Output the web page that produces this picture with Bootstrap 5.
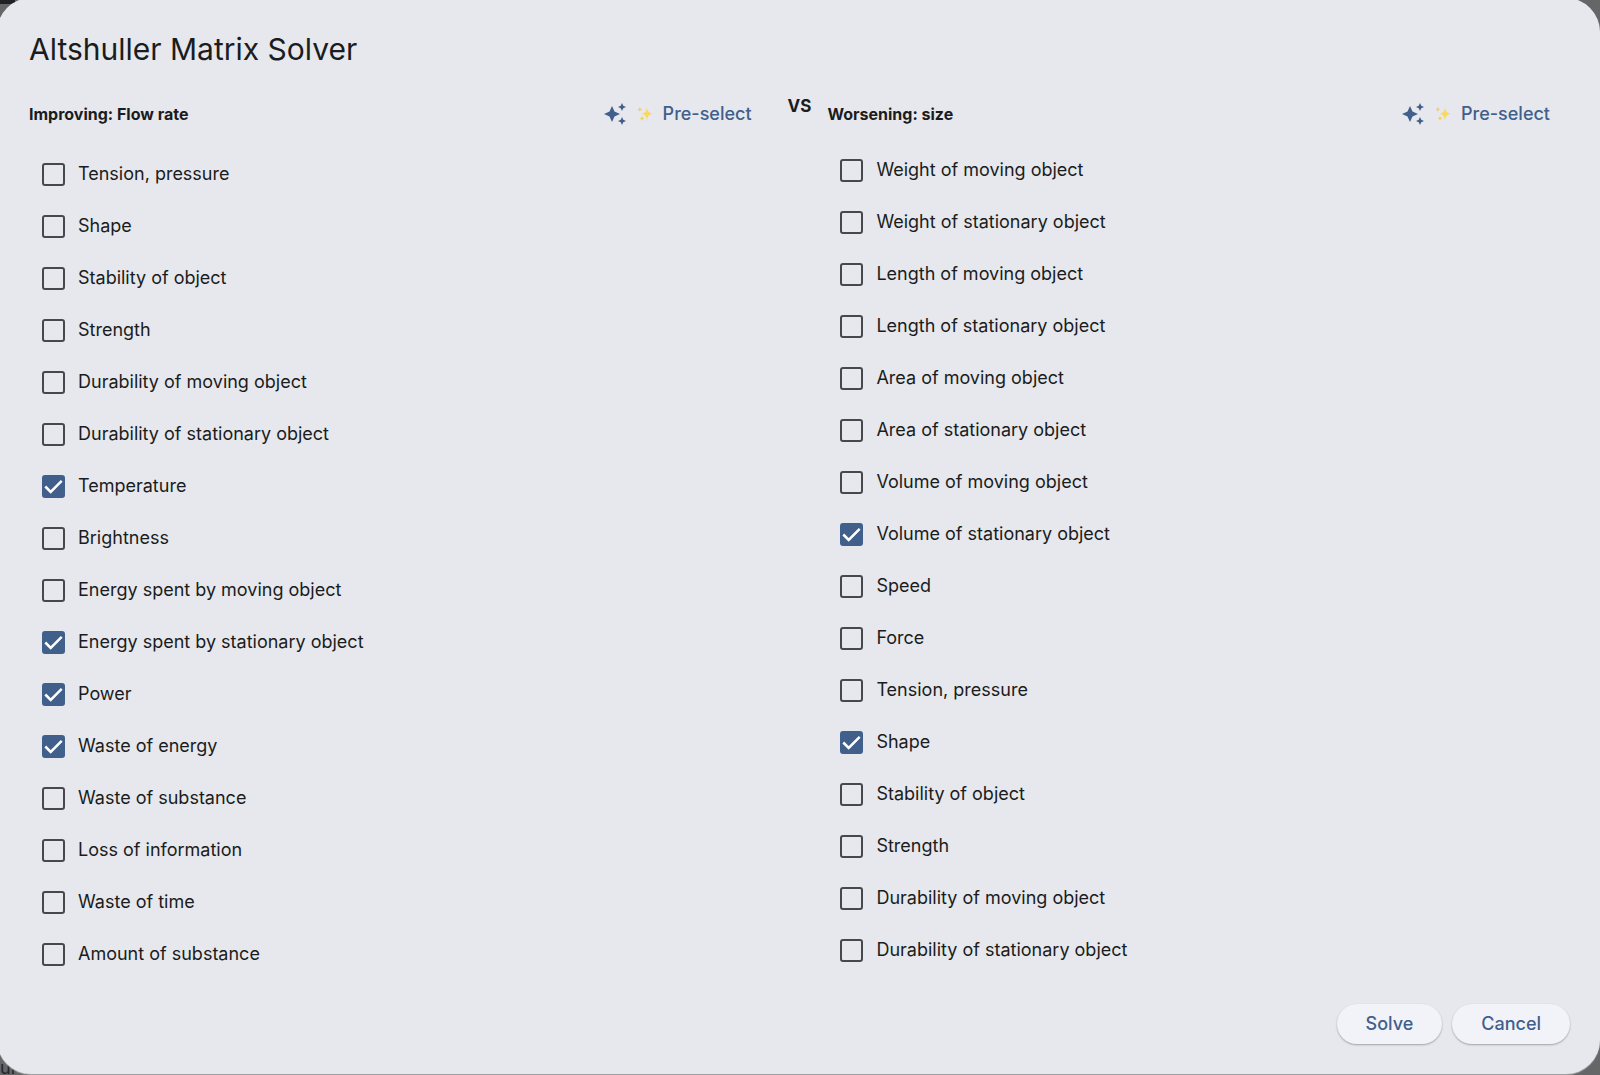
<!DOCTYPE html>
<html lang="en">
<head>
<meta charset="utf-8">
<meta name="viewport" content="width=device-width, initial-scale=1">
<title>Altshuller Matrix Solver</title>
<link href="https://cdn.jsdelivr.net/npm/bootstrap@5.3.0/dist/css/bootstrap.min.css" rel="stylesheet">
<style>
  body { font-family: Inter, "Noto Sans", sans-serif; font-size: 18px; line-height: 24px; color: #1a1c20; background: #656668; }
  .backdrop-page { position: absolute; inset: 0; overflow: hidden; color: #252629; }
  .page-bar { width: 15px; height: 4px; background: #202124; }
  .page-text { line-height: 14px; }
  .solver { border-radius: 34px; background: #e6e8ed; margin: -2px 0 1px -3px; padding: 30px 30px 30px 32px; min-height: calc(100vh + 1px); box-shadow: 0 1px 1px #a5a6a9; }
  .solver-title { font-size: 30px; line-height: 42px; font-weight: 400; }
  .side-head { min-height: 40px; margin-bottom: 10px; }
  .side-head.is-roomy { margin-bottom: 14px; }
  .side-name { font-size: 16px; line-height: 20px; font-weight: 700; }
  .versus { font-size: 17px; font-weight: 700; line-height: 24px; }
  .option { height: 52px; padding-left: 13px; gap: 13px; }
  .option .form-check-input { width: 23px; height: 23px; border: 2px solid #46484d; border-radius: 3px; background-color: transparent; }
  .option .form-check-input:checked { background-color: #415f8b; border-color: #415f8b; background-size: 23px 23px; background-position: center;
    background-image: url("data:image/svg+xml,%3csvg xmlns='http://www.w3.org/2000/svg' viewBox='0 0 23 23'%3e%3cpath fill='none' stroke='%23fff' stroke-width='2.5' d='M3.300 11.500l5.400 5.400L19.700 5.900'/%3e%3c/svg%3e"); }
  .preselect { color: #415f8b; font-size: 18px; font-weight: 500; line-height: 24px; padding: 8px 20px 8px 16px; border: 0; gap: 10px; }
  .action { color: #415f8b; background: #f2f3f9; font-size: 18px; font-weight: 500; line-height: 24px; padding: 8px 29px; border: 0; box-shadow: 0 1px 2px #0000004d; }
  .preselect:hover, .action:hover { color: #2d4b76; background: #eceef6; }
  .action-row { gap: 10px; }
</style>
<script src="https://cdn.jsdelivr.net/npm/bootstrap@5.3.0/dist/js/bootstrap.bundle.min.js"></script>
</head>
<body class="overflow-hidden">
<svg class="d-none" xmlns="http://www.w3.org/2000/svg">
  <symbol id="spark" viewBox="0 0 24 24"><path d="M19 9l1.250-2.750L23 5l-2.750-1.250L19 1l-1.250 2.750L15 5l2.750 1.250zM11.500 9.500L9 4 6.500 9.500 1 12l5.500 2.500L9 20l2.500-5.500L17 12zM19 15l-1.250 2.750L15 19l2.750 1.250L19 23l1.250-2.750L23 19l-2.750-1.250z"/></symbol>
  <symbol id="glitter" viewBox="0 0 16 16"><path fill="#fbd75b" d="M10 1.500Q10.500 7 15.500 7.700 10.500 8.400 10 14.500 9.500 8.400 4.800 7.700 9.500 7 10 1.500z"/><path fill="#f3cf6a" d="M2.800.8Q3.100 3 5.300 3.400 3.100 3.800 2.800 6 2.500 3.800.5 3.400 2.500 3 2.800.8zM5 9.800Q5.300 12 7.500 12.400 5.300 12.800 5 15 4.700 12.800 2.600 12.400 4.700 12 5 9.800z"/></symbol>
</svg>
<div class="backdrop-page d-flex flex-column justify-content-between" aria-hidden="true">
  <div class="page-bar"></div>
  <div class="page-text">ur a</div>
</div>
<main class="solver position-relative d-flex flex-column" role="dialog" aria-labelledby="title">
  <h1 class="solver-title mb-4" id="title">Altshuller Matrix Solver</h1>
  <div class="d-flex gap-3 flex-grow-1">
    <section class="flex-fill w-50" aria-label="Improving">
      <div class="side-head is-roomy d-flex align-items-center justify-content-between">
        <h2 class="side-name mb-0">Improving: Flow rate</h2>
        <button type="button" class="preselect btn d-flex align-items-center"><svg width="24" height="24" fill="currentColor"><use href="#spark"/></svg><svg width="16" height="16"><use href="#glitter"/></svg>Pre-select</button>
      </div>
      <div id="improving"></div>
    </section>
    <div class="versus">VS</div>
    <section class="flex-fill w-50" aria-label="Worsening">
      <div class="side-head d-flex align-items-center justify-content-between">
        <h2 class="side-name mb-0">Worsening: size</h2>
        <button type="button" class="preselect btn d-flex align-items-center"><svg width="24" height="24" fill="currentColor"><use href="#spark"/></svg><svg width="16" height="16"><use href="#glitter"/></svg>Pre-select</button>
      </div>
      <div id="worsening"></div>
    </section>
  </div>
  <div class="action-row d-flex justify-content-end">
    <button type="button" class="action btn rounded-pill">Solve</button>
    <button type="button" class="action btn rounded-pill">Cancel</button>
  </div>
</main>
<script>
  const lists = {
    improving: ["Tension, pressure", "Shape", "Stability of object", "Strength", "Durability of moving object", "Durability of stationary object", "*Temperature", "Brightness", "Energy spent by moving object", "*Energy spent by stationary object", "*Power", "*Waste of energy", "Waste of substance", "Loss of information", "Waste of time", "Amount of substance"],
    worsening: ["Weight of moving object", "Weight of stationary object", "Length of moving object", "Length of stationary object", "Area of moving object", "Area of stationary object", "Volume of moving object", "*Volume of stationary object", "Speed", "Force", "Tension, pressure", "*Shape", "Stability of object", "Strength", "Durability of moving object", "Durability of stationary object"]
  };
  // A leading asterisk marks an option that starts ticked.
  for (const [side, names] of Object.entries(lists)) {
    document.getElementById(side).innerHTML = names.map((name, i) =>
      `<div class="option d-flex align-items-center">
        <input class="form-check-input m-0 flex-shrink-0" type="checkbox" id="${side}-${i}"${name[0] === "*" ? " checked" : ""}>
        <label for="${side}-${i}">${name.replace("*", "")}</label>
      </div>`).join("");
  }
</script>
</body>
</html>
